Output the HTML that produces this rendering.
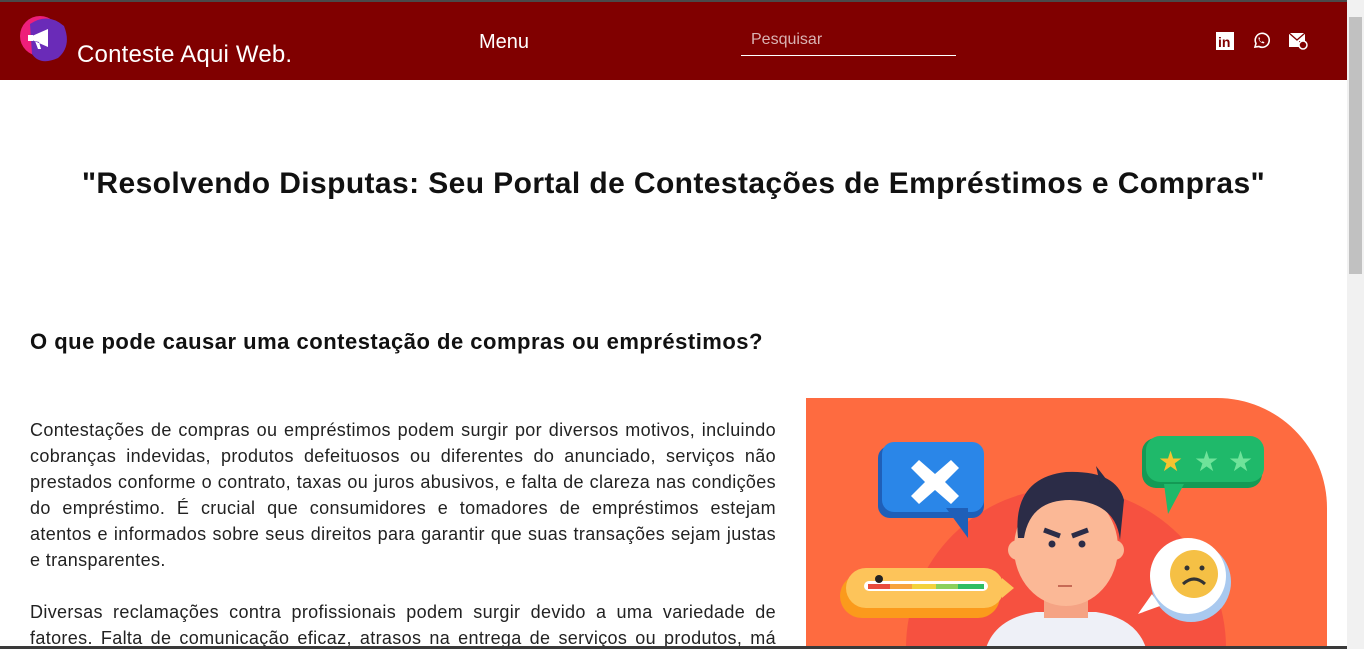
<!DOCTYPE html>
<html><head><meta charset="utf-8"><style>
*{margin:0;padding:0;box-sizing:border-box}
html,body{width:1364px;height:649px;overflow:hidden;background:#fff;font-family:"Liberation Sans",sans-serif;color:#111}
#w{position:relative;width:1364px;height:649px;overflow:hidden}
.top{position:absolute;left:0;top:0;width:1364px;height:2px;background:#4a4a4a}
.hdr{position:absolute;left:0;top:2px;width:1347px;height:78px;background:#800000}
.sb{position:absolute;right:0;top:0;width:17px;height:649px;background:#f1f1f1}
.sb .th{position:absolute;left:2px;top:17px;width:13px;height:257px;background:#c1c1c1}
.bot{position:absolute;left:0;top:646px;width:1347px;height:3px;background:#3a3a3a}
.brand{position:absolute;left:77px;top:39px;color:#fff;font-size:24px;letter-spacing:0.2px}
.menu{position:absolute;left:479px;top:29px;color:#fff;font-size:20px}
.search{position:absolute;left:741px;top:29px;width:215px;height:25px;border-bottom:1px solid #fff;color:#d9b3b3;font-size:16px;padding-left:10px}
h1{position:absolute;left:0;width:1347px;top:167px;text-align:center;font-size:30px;font-weight:bold;letter-spacing:0.4px}
h2{position:absolute;left:30px;top:329px;font-size:22px;font-weight:bold;letter-spacing:0.5px}
.txt{position:absolute;left:30px;top:417px;width:746px;font-size:18px;line-height:26px;text-align:justify;color:#222;letter-spacing:0.35px}
.txt p{margin-bottom:26px}
.img{position:absolute;left:806px;top:398px;width:521px;height:250px;background:#fe6b40;border-top-right-radius:110px;overflow:hidden}
</style></head><body><div id="w">
<div class="top"></div>
<div class="hdr">
<svg style="position:absolute;left:18px;top:10px" width="52" height="52" viewBox="0 0 52 52"><circle cx="22" cy="24" r="20" fill="#ee1f7a"/><path d="M12 12 Q30 0 46 14 Q54 34 40 46 Q22 54 14 42 Z" fill="#6a2bb8"/><path d="M14 24 L30 17 L30 35 L14 28 Z M10 23 h5 v6 h-5z M17 29 l3 8 h3 l-2-7z" fill="#fff"/></svg>
<div class="brand">Conteste Aqui Web.</div>
<div class="menu">Menu</div>
<div class="search">Pesquisar</div>
<svg style="position:absolute;left:1216px;top:30px" width="18" height="18"><rect width="18" height="18" fill="#fff"/><text x="2" y="15" font-size="14" font-weight="bold" fill="#800000" font-family="Liberation Sans">in</text></svg>
<svg style="position:absolute;left:1252px;top:30px" width="18" height="18" viewBox="0 0 18 18"><path d="M3 15 L4 11.5 A7 7 0 1 1 7 14.5 Z" fill="none" stroke="#fff" stroke-width="1.6"/><path d="M6.5 6 q0 4 5 5.5 l1-1.2 -2-1 -0.8 0.8 q-1.8-0.8-2.4-2.4 l0.8-0.8 -1-2z" fill="#fff"/></svg>
<svg style="position:absolute;left:1288px;top:30px" width="20" height="18" viewBox="0 0 20 18"><path d="M1 1 h16 v8 h-6 v6 h-10z" fill="#fff"/><path d="M1 1 l8 7 8-7" fill="none" stroke="#800000" stroke-width="1.3"/><circle cx="15" cy="13" r="4" fill="none" stroke="#fff" stroke-width="1.5"/></svg>
</div>
<h1>"Resolvendo Disputas: Seu Portal de Contestações de Empréstimos e Compras"</h1>
<h2>O que pode causar uma contestação de compras ou empréstimos?</h2>
<div class="txt"><p>Contestações de compras ou empréstimos podem surgir por diversos motivos, incluindo cobranças indevidas, produtos defeituosos ou diferentes do anunciado, serviços não prestados conforme o contrato, taxas ou juros abusivos, e falta de clareza nas condições do empréstimo. É crucial que consumidores e tomadores de empréstimos estejam atentos e informados sobre seus direitos para garantir que suas transações sejam justas e transparentes.</p><p>Diversas reclamações contra profissionais podem surgir devido a uma variedade de fatores. Falta de comunicação eficaz, atrasos na entrega de serviços ou produtos, má qualidade do trabalho realizado e cobranças inesperadas.</p></div>
<div class="img">
<svg width="521" height="250" viewBox="0 0 521 250">
<circle cx="260" cy="250" r="160" fill="#f65140"/>
<rect x="72" y="48" width="106" height="72" rx="12" fill="#1f5fb8"/>
<rect x="76" y="44" width="102" height="70" rx="12" fill="#2a86e8"/>
<path d="M140 110 l22 30 v-30z" fill="#1f5fb8"/>
<path d="M113 62 l16 14 16-14 8 8-14 14 14 14-8 8-16-14-16 14-8-8 14-14-14-14z" fill="#fff"/>
<rect x="336" y="40" width="120" height="50" rx="14" fill="#149a55"/>
<rect x="340" y="38" width="118" height="46" rx="14" fill="#1fb96a"/>
<path d="M358 86 l4 30 16-30z" fill="#1fb96a"/>
<text x="352" y="73" font-size="28" fill="#f5c330">★</text><text x="388" y="73" font-size="28" fill="#6fe39a">★</text><text x="422" y="73" font-size="28" fill="#6fe39a">★</text>
<rect x="34" y="176" width="160" height="44" rx="22" fill="#fb9a1c"/>
<rect x="40" y="170" width="158" height="40" rx="20" fill="#fdc45a"/>
<path d="M196 180 l12 10 -12 10z" fill="#fdc45a"/>
<rect x="58" y="183" width="124" height="10" rx="5" fill="#fff"/>
<rect x="62" y="186" width="22" height="5" fill="#e94b3c"/><rect x="84" y="186" width="22" height="5" fill="#f7a33c"/><rect x="106" y="186" width="24" height="5" fill="#f3d23c"/><rect x="130" y="186" width="22" height="5" fill="#8bd05a"/><rect x="152" y="186" width="26" height="5" fill="#2fbd63"/>
<circle cx="73" cy="181" r="4" fill="#222"/>
<circle cx="385" cy="184" r="40" fill="#a9c9ef"/>
<circle cx="382" cy="178" r="38" fill="#fff"/>
<path d="M346 196 l-14 20 22-8z" fill="#fff"/>
<circle cx="388" cy="176" r="24" fill="#f5c045"/>
<path d="M377 186 q11-10 22 0" fill="none" stroke="#333" stroke-width="3"/>
<circle cx="381" cy="170" r="2.5" fill="#333"/><circle cx="396" cy="170" r="2.5" fill="#333"/>
<path d="M180 250 q10-30 50-36 h60 q40 6 50 36z" fill="#eef0f7"/>
<rect x="238" y="180" width="44" height="40" fill="#f5a384"/>
<ellipse cx="260" cy="150" rx="52" ry="58" fill="#fbb896"/>
<circle cx="212" cy="152" r="10" fill="#fbb896"/><circle cx="308" cy="152" r="10" fill="#fbb896"/>
<path d="M212 140 q-6-60 48-66 q50-2 58 28 l-4 40 q-4-38-50-40 q-40 0-46 38z" fill="#2b2c47"/>
<path d="M290 68 l14 18 -10 0z" fill="#2b2c47"/>
<path d="M238 132 l16 6 M282 132 l-16 6" stroke="#2b2c47" stroke-width="5"/>
<circle cx="246" cy="146" r="3.5" fill="#2b2c47"/><circle cx="276" cy="146" r="3.5" fill="#2b2c47"/>
<path d="M252 188 h14" stroke="#c76a55" stroke-width="2"/>
</svg>
</div>
<div class="bot"></div>
<div class="sb"><div class="th"></div></div>
</div></body></html>
